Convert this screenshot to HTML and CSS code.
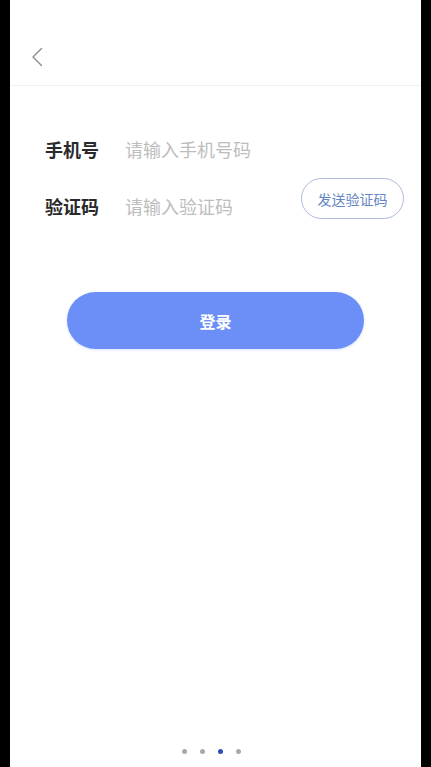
FILE: index.html
```html
<!DOCTYPE html>
<html lang="zh-CN">
<head>
<meta charset="utf-8">
<title>登录</title>
<link rel="stylesheet" href="styles.css">
</head>
<body>
<div class="screen">
  <header class="header">
    <svg class="back" width="12" height="20" viewBox="0 0 12 20" aria-label="返回">
      <path d="M10.5 1.5 L2 10 L10.5 18.5" fill="none" stroke="#8a8a8a" stroke-width="1.4" stroke-linecap="round" stroke-linejoin="round"/>
    </svg>
  </header>
  <main class="form">
    <div class="row row-phone">
      <span class="label">手机号</span>
      <input class="field" type="tel" placeholder="请输入手机号码">
    </div>
    <div class="row row-code">
      <span class="label">验证码</span>
      <input class="field" type="text" placeholder="请输入验证码">
      <button class="send" type="button">发送验证码</button>
    </div>
    <div class="submit-wrap">
      <button class="submit" type="button">登录</button>
    </div>
  </main>
  <div class="spacer"></div>
  <div class="dots">
    <span class="dot"></span>
    <span class="dot"></span>
    <span class="dot active"></span>
    <span class="dot"></span>
  </div>
</div>
</body>
</html>
```
FILE: styles.css
```css
* { box-sizing: border-box; }
html, body {
  margin: 0;
  padding: 0;
  height: 100%;
  background: #000;
}
body {
  font-family: "Noto Sans CJK SC", "Noto Sans", sans-serif;
  display: flex;
  padding-left: 10px;
}
.screen {
  width: 411px;
  height: 767px;
  background: #fff;
  display: flex;
  flex-direction: column;
}
.header {
  height: 86px;
  border-bottom: 1px solid #f1f1f1;
  padding: 47px 0 0 21px;
  flex: none;
}
.back { display: block; }
.form {
  padding: 35px 17px 0 35px;
  display: flex;
  flex-direction: column;
}
.row {
  display: flex;
  align-items: center;
  height: 56px;
}
.row-code { height: 57px; }
.label {
  width: 80px;
  flex: none;
  font-size: 18px;
  font-weight: 700;
  color: #2a2a2a;
  line-height: 56px;
}
.field {
  flex: 1;
  min-width: 0;
  border: none;
  outline: none;
  padding: 0;
  background: transparent;
  font-family: inherit;
  font-size: 18px;
  color: #333;
  height: 28px;
}
.field::placeholder { color: #bdbdbd; }
.send {
  align-self: flex-start;
  margin-top: 1px;
  width: 103px;
  height: 41px;
  flex: none;
  border: 1.5px solid #adbbd8;
  border-radius: 21px;
  background: #fff;
  color: #6486c2;
  font-family: inherit;
  font-size: 14px;
  padding: 0;
}
.submit-wrap {
  display: flex;
  justify-content: center;
  padding: 58px 0 0;
  margin-left: -18px;
}
.submit {
  width: 297px;
  height: 57px;
  border: none;
  border-radius: 29px;
  background: #6b8ff7;
  color: #fff;
  font-family: inherit;
  font-size: 16px;
  font-weight: 700;
  box-shadow: 0 1px 3px rgba(107,143,247,0.25);
}
.spacer { flex: 1; }
.dots {
  display: flex;
  justify-content: center;
  gap: 13px;
  padding: 0 9px 13px 0;
}
.dot {
  width: 5px;
  height: 5px;
  border-radius: 50%;
  background: #a9a9a9;
}
.dot.active { background: #2b4fb5; }
```
